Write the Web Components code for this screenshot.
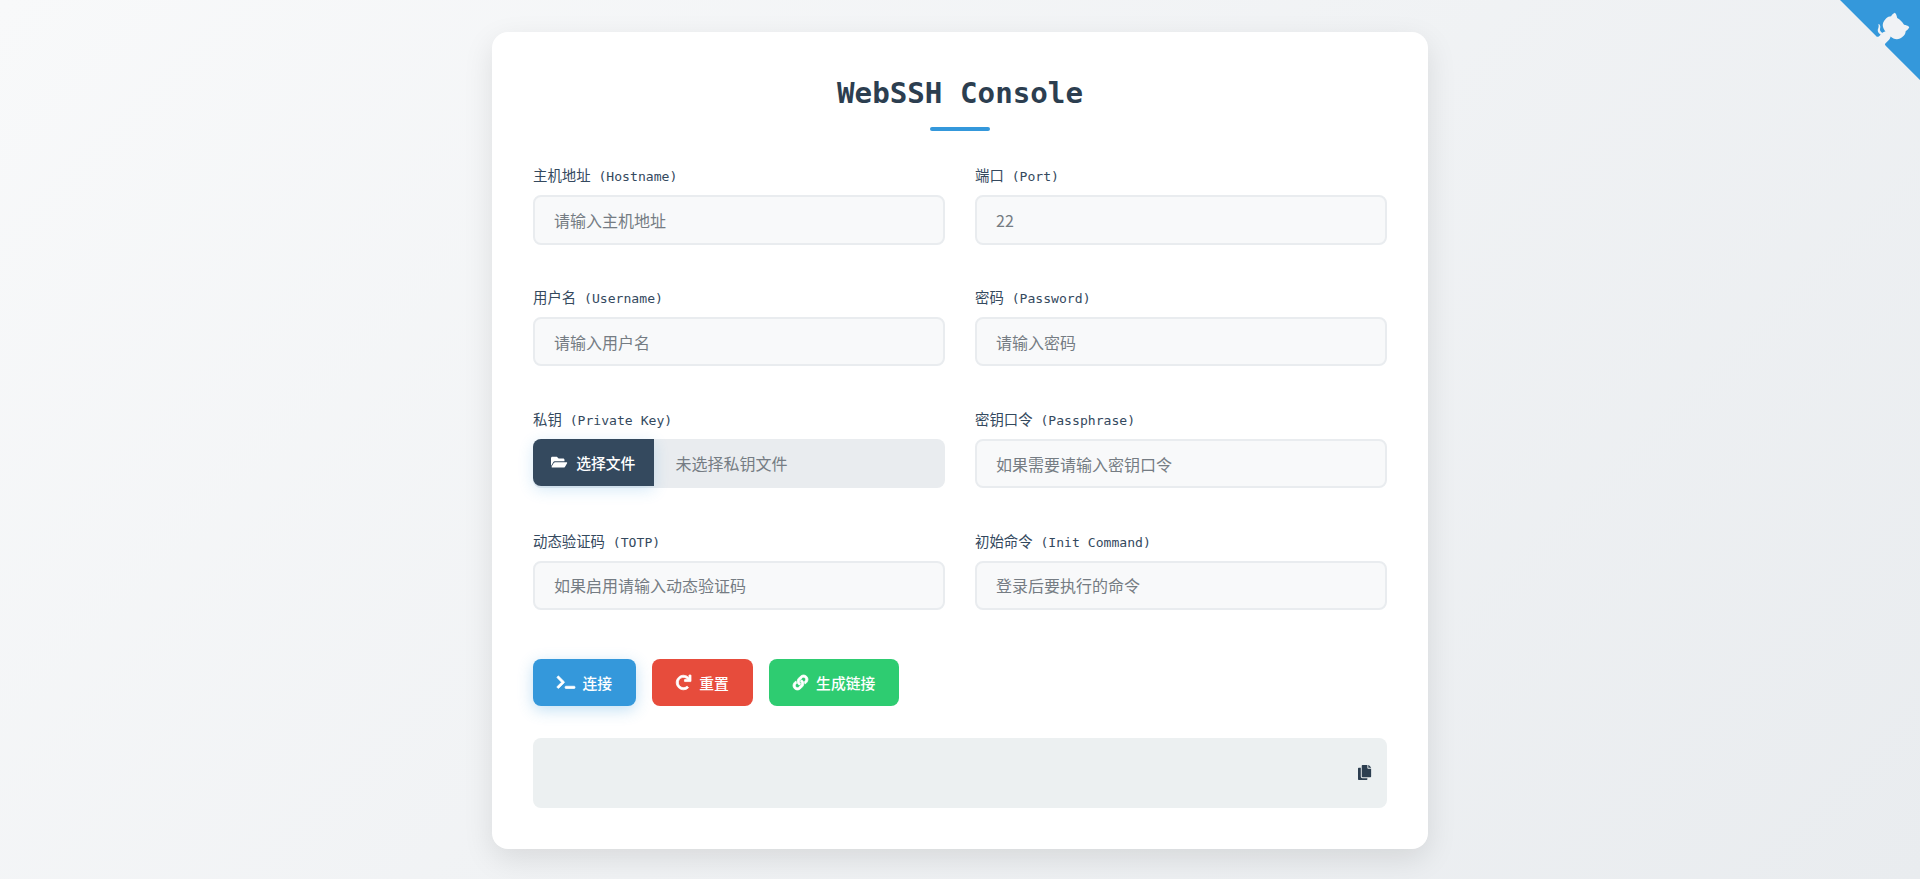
<!DOCTYPE html>
<html lang="zh-CN"><head><meta charset="utf-8"><title>WebSSH Console</title>
<style>
html,body{margin:0;padding:0}
body{min-height:879px;box-sizing:border-box;padding:32px 0 31px;background:linear-gradient(135deg,#f8f9fa 0%,#e9ecef 100%);font-family:"Noto Sans CJK SC",sans-serif;display:flex;justify-content:center;align-items:flex-start;color:#2c3e50}
</style></head><body>
<github-corner></github-corner>
<ssh-card>
  <ssh-field zh="主机地址" en="(Hostname)" placeholder="请输入主机地址"></ssh-field>
  <ssh-field zh="端口" en="(Port)" placeholder="22"></ssh-field>
  <ssh-field zh="用户名" en="(Username)" placeholder="请输入用户名"></ssh-field>
  <ssh-field zh="密码" en="(Password)" placeholder="请输入密码" type="password"></ssh-field>
  <ssh-file zh="私钥" en="(Private Key)" button="选择文件" hint="未选择私钥文件"></ssh-file>
  <ssh-field zh="密钥口令" en="(Passphrase)" placeholder="如果需要请输入密钥口令" type="password"></ssh-field>
  <ssh-field zh="动态验证码" en="(TOTP)" placeholder="如果启用请输入动态验证码"></ssh-field>
  <ssh-field zh="初始命令" en="(Init Command)" placeholder="登录后要执行的命令"></ssh-field>
  <ssh-button slot="actions" icon="terminal" size="14.4" gap="7.5" color="#3498db" shadow>连接</ssh-button>
  <ssh-button slot="actions" icon="redo" size="15" gap="8.2" color="#e74c3c">重置</ssh-button>
  <ssh-button slot="actions" icon="link" size="15" gap="8.2" color="#2ecc71">生成链接</ssh-button>
</ssh-card>
<script>
const ICONS={
terminal:['0 0 640 512','M257.981 272.971L63.638 467.314c-9.373 9.373-24.569 9.373-33.941 0L7.029 444.647c-9.357-9.357-9.375-24.522-.04-33.901L161.011 256 6.99 101.255c-9.335-9.379-9.317-24.544.04-33.901l22.667-22.667c9.373-9.373 24.569-9.373 33.941 0L257.981 239.03c9.373 9.372 9.373 24.568 0 33.941zM640 456v-32c0-13.255-10.745-24-24-24H312c-13.255 0-24 10.745-24 24v32c0 13.255 10.745 24 24 24h304c13.255 0 24-10.745 24-24z'],
redo:['0 0 512 512','M500.33 0h-47.41a12 12 0 0 0-12 12.57l4 82.76A247.42 247.42 0 0 0 256 8C119.34 8 7.9 119.53 8 256.19 8.1 393.07 119.1 504 256 504a247.1 247.1 0 0 0 166.18-63.91 12 12 0 0 0 .48-17.43l-34-34a12 12 0 0 0-16.38-.55A176 176 0 1 1 402.1 157.8l-101.53-4.87a12 12 0 0 0-12.57 12v47.41a12 12 0 0 0 12 12h200.33a12 12 0 0 0 12-12V12a12 12 0 0 0-12-12z'],
link:['0 0 512 512','M326.612 185.391c59.747 59.809 58.927 155.698.36 214.59-.11.12-.24.25-.36.37l-67.2 67.2c-59.27 59.27-155.699 59.262-214.96 0-59.27-59.26-59.27-155.7 0-214.96l37.106-37.106c9.84-9.84 26.786-3.3 27.294 10.606.648 17.722 3.826 35.527 9.69 52.721 1.986 5.822.567 12.262-3.783 16.612l-13.087 13.087c-28.026 28.026-28.905 73.66-1.155 101.96 28.024 28.579 74.086 28.749 102.325.51l67.2-67.19c28.191-28.191 28.073-73.757 0-101.83-3.701-3.694-7.429-6.564-10.341-8.569a16.037 16.037 0 0 1-6.947-12.606c-.396-10.567 3.348-21.456 11.698-29.806l21.054-21.055c5.521-5.521 14.182-6.199 20.584-1.731a152.482 152.482 0 0 1 20.522 17.197zM467.547 44.449c-59.261-59.262-155.69-59.27-214.96 0l-67.2 67.2c-.12.12-.25.25-.36.37-58.566 58.892-59.387 154.781.36 214.59a152.454 152.454 0 0 0 20.521 17.196c6.402 4.468 15.064 3.789 20.584-1.731l21.054-21.055c8.35-8.35 12.094-19.239 11.698-29.806a16.037 16.037 0 0 0-6.947-12.606c-2.912-2.005-6.64-4.875-10.341-8.569-28.073-28.073-28.191-73.639 0-101.83l67.2-67.19c28.239-28.239 74.3-28.069 102.325.51 27.75 28.3 26.872 73.934-1.155 101.96l-13.087 13.087c-4.35 4.35-5.769 10.79-3.783 16.612 5.864 17.194 9.042 34.999 9.69 52.721.509 13.906 17.454 20.446 27.294 10.606l37.106-37.106c59.271-59.259 59.271-155.699.001-214.959z'],
copy:['0 0 448 512','M320 448v40c0 13.255-10.745 24-24 24H24c-13.255 0-24-10.745-24-24V120c0-13.255 10.745-24 24-24h72v296c0 30.879 25.121 56 56 56h168zm0-344V0H152c-13.255 0-24 10.745-24 24v368c0 13.255 10.745 24 24 24h272c13.255 0 24-10.745 24-24V128H344c-13.2 0-24-10.8-24-24zm120.971-31.029L375.029 7.029A24 24 0 0 0 358.059 0H352v96h96v-6.059a24 24 0 0 0-7.029-16.97z'],
folder:['0 0 576 512','M572.694 292.093L500.27 416.248A63.997 63.997 0 0 1 444.989 448H45.025c-18.523 0-30.064-20.093-20.731-36.093l72.424-124.155A64 64 0 0 1 152 256h399.964c18.523 0 30.064 20.093 20.73 36.093zM152 224h328v-48c0-26.51-21.49-48-48-48H272l-64-64H48C21.49 64 0 85.49 0 112v278.046l69.077-118.418C86.214 242.25 117.989 224 152 224z']
};
const icon=(n,h,s=0)=>{const[v,d]=ICONS[n];const[,,w,ht]=v.split(' ');return `<svg viewBox="${v}" height="${h}" width="${h*w/ht}" fill="currentColor" stroke="currentColor" stroke-width="${s}" overflow="visible" aria-hidden="true"><path d="${d}"/></svg>`};
const esc=s=>(s||'').replace(/"/g,'&quot;');
const MONO='"DejaVu Sans Mono","Noto Sans CJK SC",monospace';
class Base extends HTMLElement{constructor(){super();this.attachShadow({mode:'open'})}}
customElements.define('github-corner',class extends Base{connectedCallback(){this.shadowRoot.innerHTML=`<style>:host{position:absolute;top:0;right:0;display:block;width:80px;height:80px;line-height:0}svg{fill:#3498db;color:#f0f2f5}</style>
<svg width="80" height="80" viewBox="0 0 250 250" aria-hidden="true"><path d="M0,0 L115,115 L130,115 L142,142 L250,250 L250,0 Z"/><path d="M128.3,109.0 C113.8,99.7 119.0,89.6 119.0,89.6 C122.0,82.7 120.5,78.6 120.5,78.6 C119.2,72.0 123.4,76.3 123.4,76.3 C127.3,80.9 125.5,87.3 125.5,87.3 C122.9,97.6 130.6,101.9 134.4,103.2" fill="currentColor"/><path d="M115.0,115.0 C114.9,115.1 118.7,116.5 119.8,115.4 L133.7,101.6 C136.9,99.2 139.9,98.4 142.2,98.6 C133.8,88.0 127.5,74.4 143.8,58.0 C148.5,53.4 154.0,51.2 159.7,51.0 C160.3,49.4 163.2,43.6 171.4,40.1 C171.4,40.1 176.1,42.5 178.8,56.2 C183.1,58.6 187.2,61.8 190.9,65.4 C194.5,69.0 197.7,73.2 200.1,77.6 C213.8,80.2 216.3,84.9 216.3,84.9 C212.7,93.1 206.9,96.0 205.4,96.6 C205.1,102.4 203.0,107.8 198.3,112.5 C181.9,128.9 168.3,122.5 157.7,114.1 C157.9,116.9 156.7,120.9 152.7,124.9 L141.0,136.5 C139.8,137.7 141.6,141.9 141.8,141.8 Z" fill="currentColor"/></svg>`}});
customElements.define('ssh-card',class extends Base{connectedCallback(){this.shadowRoot.innerHTML=`<style>
:host{display:block;box-sizing:border-box;width:936px;padding:40px 41px 41px;background:#fff;border-radius:16px;box-shadow:0 10px 30px rgba(0,0,0,.1)}
h1{margin:0 0 35px;position:relative;text-align:center;font:700 29.2px/42px ${MONO};color:#2c3e50;padding-bottom:17px}
h1::after{content:"";position:absolute;left:50%;bottom:0;width:60px;height:4px;margin-left:-30px;background:#3498db;border-radius:2px}
.grid{display:grid;grid-template-columns:1fr 1fr;column-gap:30px;row-gap:43.3px}
.actions{display:flex;gap:16px;margin-top:48.4px}
.result{display:flex;align-items:center;justify-content:flex-end;height:70px;box-sizing:border-box;margin-top:32px;padding:0 16px;background:#ecf0f1;border-radius:8px;color:#2c3e50}
</style><h1>WebSSH Console</h1><div class="grid"><slot></slot></div><div class="actions"><slot name="actions"></slot></div><div class="result">${icon('copy',15)}</div>`}});
const labelCss=`label{display:block;height:19px;font:13.1px/17px ${MONO};margin-bottom:10px;color:#34495e}label b{font:400 14.4px/17px "Noto Sans CJK SC",sans-serif}`;
customElements.define('ssh-field',class extends Base{connectedCallback(){const g=n=>this.getAttribute(n)||'';
this.shadowRoot.innerHTML=`<style>:host{display:block}${labelCss}
input{display:block;width:100%;box-sizing:border-box;height:49.6px;padding:0 19px;border:2px solid #e9ecef;border-radius:8px;background:#f8f9fa;font:16px "Noto Sans CJK SC",sans-serif;color:#495057;outline:none}
input::placeholder{color:#757c83;opacity:1}</style>
<label><b>${g('zh')}</b> ${g('en')}</label><input type="${g('type')||'text'}" placeholder="${esc(g('placeholder'))}">`}});
customElements.define('ssh-file',class extends Base{connectedCallback(){const g=n=>this.getAttribute(n)||'';
this.shadowRoot.innerHTML=`<style>:host{display:block}${labelCss}
.box{display:flex;align-items:flex-start;height:49.6px;background:#e9ecef;border-radius:8px}
.btn{display:flex;align-items:center;gap:9px;height:47px;box-sizing:border-box;padding:0 19px 0 18px;background:#34495e;color:#fff;border-radius:8px 0 0 8px;font-size:14.8px;font-weight:500;box-shadow:0 4px 15px rgba(52,152,219,.2)}
.hint{font-size:16px;line-height:49.6px;margin-left:21px;color:#757c83}</style>
<label><b>${g('zh')}</b> ${g('en')}</label><div class="box"><span class="btn">${icon('folder',14.4)}<span>${g('button')}</span></span><span class="hint">${g('hint')}</span></div>`}});
customElements.define('ssh-button',class extends Base{connectedCallback(){const c=this.getAttribute('color');
this.shadowRoot.innerHTML=`<style>:host{display:inline-flex;align-items:center;gap:${this.getAttribute('gap')}px;height:47px;box-sizing:border-box;padding:0 24px;background:${c};color:#fff;border-radius:8px;font-size:14.8px;font-weight:500;${this.hasAttribute('shadow')?'box-shadow:0 4px 15px rgba(52,152,219,.3)':''}}</style>${icon(this.getAttribute('icon'),+this.getAttribute('size'),26)}<slot></slot>`}});
</script>
</body></html>
